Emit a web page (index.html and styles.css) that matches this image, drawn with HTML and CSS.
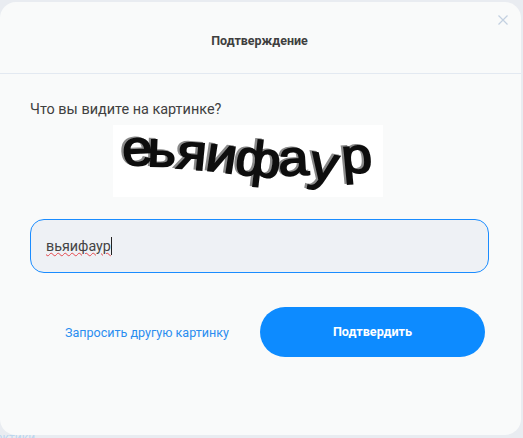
FILE: index.html
```html
<!DOCTYPE html>
<html lang="ru">
<head>
<meta charset="utf-8">
<title>Подтверждение</title>
<link rel="stylesheet" href="styles.css">
</head>
<body>
<div class="backdrop-text">актики</div>
<section class="modal">
  <button class="close" aria-label="Закрыть">
    <svg width="10" height="10" viewBox="0 0 10 10"><path d="M.5.5l9 9M9.500.5l-9 9" fill="none" stroke="#c3d0e0" stroke-width="1.2"/></svg>
  </button>
  <header class="modal-head">Подтверждение</header>
  <div class="modal-body">
    <p class="question">Что вы видите на картинке?</p>
    <div class="captcha">
      <svg width="270" height="72" viewBox="0 0 270 72">
        <defs><filter id="soft" x="-5%" y="-20%" width="110%" height="140%"><feGaussianBlur stdDeviation="0.7"/></filter></defs>
        <rect width="270" height="72" fill="#fff"/>
        <g filter="url(#soft)" font-family="Liberation Sans, sans-serif" font-size="50" transform="scale(1.1 1)">
          <text class="ghost" x="7 29 55 81 108 149 175 207" y="40 40 42 44 48 50 52 48" rotate="-3 2 5 8 6 -3 10 -5">еьяифаур</text>
          <text class="ink" x="9 31 57 83 110 151 177 209" y="41 41 43 45 49 51 53 49" rotate="-3 2 5 8 6 -3 10 -5">еьяифаур</text>
        </g>
      </svg>
    </div>
    <div class="answer"><span class="typed">вьяифаур</span><span class="caret"></span></div>
    <div class="actions">
      <a class="other" href="#">Запросить другую картинку</a>
      <button class="confirm">Подтвердить</button>
    </div>
  </div>
</section>
</body>
</html>
```
FILE: styles.css
```css
* { box-sizing: border-box; }
html, body { margin: 0; height: 100%; }
body {
  background: #e9ecf1;
  font-family: Roboto, "Liberation Sans", sans-serif;
  overflow: hidden;
  position: relative;
  padding-top: 2px;
}
.backdrop-text {
  position: absolute;
  left: -4px;
  top: 431px;
  font-size: 12px;
  color: #bcd6ee;
}
.modal {
  position: relative;
  width: 521px;
  height: 433px;
  background: #f9fafa;
  border-radius: 16px;
}
.close {
  position: absolute;
  top: 13px;
  right: 13px;
  width: 10px;
  height: 10px;
  padding: 0;
  border: 0;
  background: none;
  display: flex;
}
.modal-head {
  height: 72px;
  padding: 5px 2px 0 0;
  display: flex;
  align-items: center;
  justify-content: center;
  font-size: 12.5px;
  font-weight: 700;
  color: #3f3f3f;
  border-bottom: 1px solid #e3e9f1;
}
.modal-body {
  padding: 26px 32px 0 30px;
}
.question {
  margin: 0;
  font-size: 14.45px;
  line-height: 20px;
  color: #404040;
}
.captcha {
  display: flex;
  margin-top: 5px;
  margin-left: 83px;
}
.answer {
  margin-top: 22px;
  height: 54px;
  width: 459px;
  display: flex;
  align-items: center;
  padding-left: 15px;
  background: #eef1f5;
  border: 1px solid #1a8cff;
  border-radius: 14px;
  font-size: 14.3px;
  color: #444;
}
.typed {
  text-decoration: underline wavy #e5484d 0.7px;
  text-underline-offset: 1px;
}
.caret {
  width: 1px;
  height: 18px;
  background: #222;
}
.actions {
  display: flex;
  align-items: center;
  margin-top: 34px;
  padding: 0 4px 0 35px;
}
.other {
  font-size: 12.55px;
  color: #2a8df0;
  text-decoration: none;
  white-space: nowrap;
}
.confirm {
  margin-left: auto;
  width: 225px;
  height: 50px;
  padding: 0 0 2px;
  border: 0;
  border-radius: 25px;
  background: #0d8bff;
  color: #fff;
  font-family: inherit;
  font-size: 12.6px;
  font-weight: 700;
}
.ink { fill: #0a0a0a; stroke: #0a0a0a; stroke-width: 1.6; }
.ghost { fill: #8a8a8a; stroke: #8a8a8a; stroke-width: 1.8; }
```
